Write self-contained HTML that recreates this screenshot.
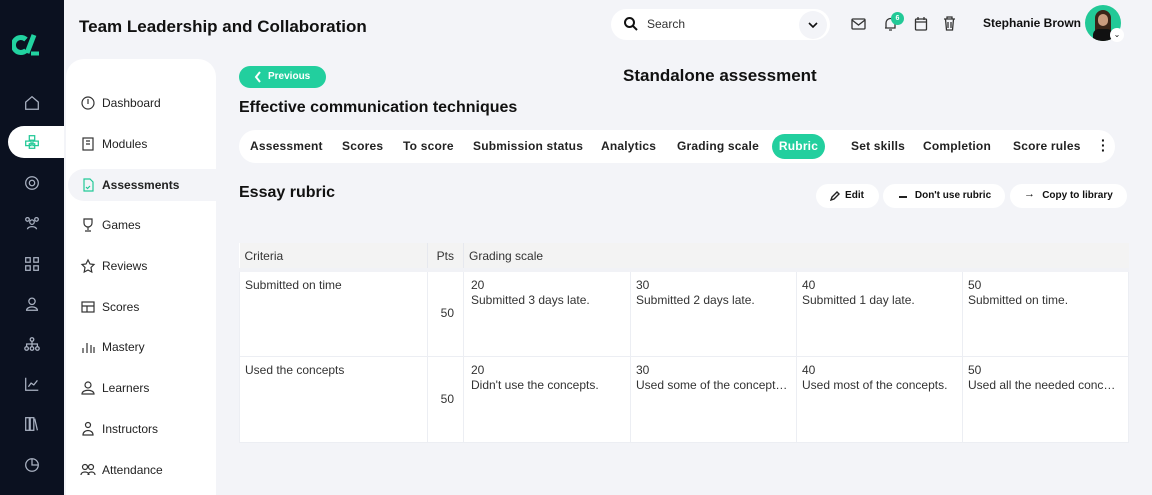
<!DOCTYPE html>
<html><head><style>
*{box-sizing:border-box;margin:0;padding:0}
body{width:1152px;height:495px;overflow:hidden;background:#f3f4f8;font-family:"Liberation Sans",sans-serif;color:#111;position:relative}
.abs{position:absolute}
.side{left:0;top:0;width:64px;height:495px;background:#0b1120}
.side svg{position:absolute;left:23px;width:18px;height:18px;stroke:#aab2c2;fill:none;stroke-width:1.4}
.nav{left:66px;top:59px;width:150px;height:436px;background:#fff;border-top-left-radius:18px;border-top-right-radius:18px}
.ni{position:absolute;left:14px;font-size:12px;color:#222;height:32px;line-height:32px;width:136px;padding-left:22px}
.ni svg{position:absolute;left:0;top:8px;width:16px;height:16px;stroke:#333;fill:none;stroke-width:1.2}
.tabs{left:239px;top:130px;width:876px;height:33px;background:#fff;border-radius:17px}
.tab{position:absolute;top:0;height:33px;line-height:33px;font-size:12px;font-weight:bold;color:#222;letter-spacing:.2px}
.btn{position:absolute;top:184px;height:24px;background:#fff;border-radius:12px;font-size:10px;font-weight:bold;line-height:24px;text-align:center}
table{position:absolute;left:239px;top:243px;width:890px;border-collapse:collapse;font-size:12px;color:#333;background:#fff}
td{border:1px solid #eceef3;vertical-align:top;padding:6px 5px;line-height:15px}
th{background:#f3f3f3;font-weight:normal;text-align:left;padding:0 5px;height:27px;border-bottom:4px solid #f1f2f6;border-right:1px solid #e6e8ee}
</style></head><body>
<div class="abs side">
<svg style="left:12px;top:33px;width:28px;height:24px;stroke:#22d3a0;stroke-width:5;stroke-linecap:butt" viewBox="0 0 28 24"><path d="M14 6.5A7.5 7.5 0 1 0 14 17.5"/><path d="M22 2L15 20"/><path d="M19 20.5h8" stroke-width="4"/></svg>
<svg style="top:94px" viewBox="0 0 20 20"><path d="M3 9l7-6 7 6v8H3z"/></svg>
<div class="abs" style="left:8px;top:126px;width:56px;height:32px;background:#fff;border-radius:16px 0 0 16px"></div>
<svg style="top:133px;stroke:#22c997" viewBox="0 0 20 20"><rect x="7" y="3" width="6" height="5"/><rect x="3" y="9" width="6" height="5"/><rect x="11" y="9" width="6" height="5"/><rect x="7" y="12" width="6" height="5"/></svg>
<svg style="top:174px" viewBox="0 0 20 20"><circle cx="10" cy="10" r="7"/><circle cx="10" cy="10" r="3"/></svg>
<svg style="top:214px" viewBox="0 0 20 20"><circle cx="5" cy="6" r="2"/><circle cx="15" cy="6" r="2"/><circle cx="10" cy="9" r="2.5"/><path d="M5 17c0-4 10-4 10 0"/></svg>
<svg style="top:255px" viewBox="0 0 20 20"><rect x="3" y="3" width="5" height="5"/><rect x="12" y="3" width="5" height="5"/><rect x="3" y="12" width="5" height="5"/><rect x="12" y="12" width="5" height="5"/></svg>
<svg style="top:295px" viewBox="0 0 20 20"><circle cx="10" cy="7" r="3.5"/><path d="M4 17c0-5 12-5 12 0z"/></svg>
<svg style="top:335px" viewBox="0 0 20 20"><circle cx="10" cy="5" r="2"/><circle cx="4" cy="15" r="2"/><circle cx="10" cy="15" r="2"/><circle cx="16" cy="15" r="2"/><path d="M10 7v6M4 13v-3h12v3"/></svg>
<svg style="top:375px" viewBox="0 0 20 20"><path d="M3 3v14h14M6 13l3-4 3 2 4-5"/></svg>
<svg style="top:415px" viewBox="0 0 20 20"><rect x="3" y="3" width="4" height="14"/><rect x="8" y="3" width="4" height="14"/><path d="M13 4l3 13"/></svg>
<svg style="top:456px" viewBox="0 0 20 20"><circle cx="10" cy="10" r="7"/><path d="M10 3v7h7"/></svg>
</div>
<div class="abs" style="left:79px;top:17px;font-size:17px;font-weight:bold">Team Leadership and Collaboration</div>
<div class="abs nav">
<div class="abs" style="left:2px;top:110px;width:148px;height:32px;background:#f3f4f8;border-radius:16px 0 0 16px"></div>
<div class="ni" style="top:28px"><svg viewBox="0 0 16 16"><circle cx="8" cy="8" r="6"/><path d="M8 4v5"/></svg>Dashboard</div>
<div class="ni" style="top:69px"><svg viewBox="0 0 16 16"><rect x="3" y="2" width="10" height="12"/><path d="M6 5h4M6 8h4"/></svg>Modules</div>
<div class="ni" style="top:110px;font-weight:bold"><svg viewBox="0 0 16 16" style="stroke:#22c997"><path d="M4 2h6l3 3v9H4z"/><path d="M6 10l1.5 1.5L10 9"/></svg>Assessments</div>
<div class="ni" style="top:150px"><svg viewBox="0 0 16 16"><path d="M4 2h8v4a4 4 0 0 1-8 0zM8 10v3M5 14h6"/></svg>Games</div>
<div class="ni" style="top:191px"><svg viewBox="0 0 16 16"><path d="M8 2l2 4 4 .5-3 3 .8 4.5L8 12l-3.8 2 .8-4.5-3-3 4-.5z"/></svg>Reviews</div>
<div class="ni" style="top:232px"><svg viewBox="0 0 16 16"><rect x="2" y="3" width="12" height="10"/><path d="M2 7h12M7 7v6"/></svg>Scores</div>
<div class="ni" style="top:272px"><svg viewBox="0 0 16 16"><path d="M3 14V9M7 14V4M11 14V6M14 14V8"/></svg>Mastery</div>
<div class="ni" style="top:313px"><svg viewBox="0 0 16 16"><circle cx="8" cy="5" r="3"/><path d="M2 14c0-5 12-5 12 0z"/></svg>Learners</div>
<div class="ni" style="top:354px"><svg viewBox="0 0 16 16"><circle cx="8" cy="4" r="2.5"/><path d="M3 14c0-6 10-6 10 0z"/></svg>Instructors</div>
<div class="ni" style="top:395px"><svg viewBox="0 0 16 16"><circle cx="5" cy="5" r="2.5"/><circle cx="11" cy="5" r="2.5"/><path d="M1 13c0-4 8-4 8 0M8 13c0-4 7-4 7 0"/></svg>Attendance</div>
</div>
<div class="abs" style="left:611px;top:9px;width:219px;height:31px;background:#fff;border-radius:16px"></div>
<svg class="abs" style="left:623px;top:16px" width="16" height="16" viewBox="0 0 16 16" fill="none" stroke="#111" stroke-width="2"><circle cx="6.5" cy="6.5" r="4.5"/><path d="M10 10l4 4"/></svg>
<div class="abs" style="left:647px;top:17px;font-size:12px;color:#333">Search</div>
<div class="abs" style="left:799px;top:11px;width:28px;height:28px;border-radius:14px;background:#f3f4f8"></div>
<svg class="abs" style="left:807px;top:19px" width="12" height="12" viewBox="0 0 12 12" fill="none" stroke="#111" stroke-width="1.6"><path d="M2 4l4 4 4-4"/></svg>
<svg class="abs" style="left:851px;top:17px" width="15" height="14" viewBox="0 0 15 14" fill="none" stroke="#333" stroke-width="1.3"><rect x="1" y="2" width="13" height="10" rx="1"/><path d="M1 3l6.5 5L14 3"/></svg>
<svg class="abs" style="left:883px;top:16px" width="15" height="16" viewBox="0 0 15 16" fill="none" stroke="#333" stroke-width="1.3"><path d="M3 12V7a4.5 4.5 0 0 1 9 0v5H2M6 14h3"/></svg>
<div class="abs" style="left:891px;top:12px;width:13px;height:13px;border-radius:7px;background:#22c997;color:#fff;font-size:7px;text-align:center;line-height:13px;font-weight:bold">6</div>
<svg class="abs" style="left:914px;top:16px" width="14" height="15" viewBox="0 0 14 15" fill="none" stroke="#333" stroke-width="1.3"><rect x="1.5" y="3" width="11" height="11" rx="1"/><path d="M1.5 6h11M4 1v3M10 1v3"/></svg>
<svg class="abs" style="left:943px;top:16px" width="13" height="15" viewBox="0 0 13 15" fill="none" stroke="#333" stroke-width="1.3"><path d="M1 3h11M4 3V1h5v2M2.5 3l1 11h6l1-11M5 6v6M8 6v6"/></svg>
<div class="abs" style="left:983px;top:16px;font-size:12px;font-weight:bold">Stephanie Brown</div>
<div class="abs" style="left:1085px;top:5px;width:36px;height:36px;border-radius:18px;background:#22c997;overflow:hidden"><div style="position:absolute;left:10px;top:5px;width:16px;height:32px;background:#3a2418;border-radius:8px 8px 0 0"></div><div style="position:absolute;left:13px;top:9px;width:10px;height:12px;background:#c99b7e;border-radius:5px"></div><div style="position:absolute;left:8px;top:24px;width:20px;height:14px;background:#111;border-radius:6px 6px 0 0"></div></div>
<div class="abs" style="left:1110px;top:28px;width:14px;height:14px;border-radius:7px;background:#fff;font-size:8px;text-align:center;line-height:13px">⌄</div>
<div class="abs" style="left:239px;top:66px;width:87px;height:22px;background:#22cf9e;border-radius:11px;color:#fff;font-size:10px;font-weight:bold;line-height:22px;padding-left:29px">Previous</div>
<svg class="abs" style="left:254px;top:71px" width="8" height="12" viewBox="0 0 8 12" fill="none" stroke="#fff" stroke-width="2"><path d="M6 1L2 6l4 5"/></svg>
<div class="abs" style="left:623px;top:66px;font-size:17px;font-weight:bold">Standalone assessment</div>
<div class="abs" style="left:239px;top:99px;font-size:16px;font-weight:bold">Effective communication techniques</div>
<div class="abs tabs">
<div class="tab" style="left:11px">Assessment</div>
<div class="tab" style="left:103px">Scores</div>
<div class="tab" style="left:164px">To score</div>
<div class="tab" style="left:234px">Submission status</div>
<div class="tab" style="left:362px">Analytics</div>
<div class="tab" style="left:438px">Grading scale</div>
<div class="tab" style="left:533px;top:4px;height:25px;line-height:25px;width:53px;text-align:center;background:#22cf9e;border-radius:13px;color:#fff">Rubric</div>
<div class="tab" style="left:612px">Set skills</div>
<div class="tab" style="left:684px">Completion</div>
<div class="tab" style="left:774px">Score rules</div>
</div>
<div class="abs" style="left:1101px;top:138px;font-size:14px;font-weight:bold;line-height:5px">·<br>·<br>·</div>
<div class="abs" style="left:239px;top:184px;font-size:16px;font-weight:bold">Essay rubric</div>
<div class="btn" style="left:816px;width:63px;padding-left:14px">Edit</div>
<svg class="abs" style="left:830px;top:191px" width="10" height="10" viewBox="0 0 10 10" fill="none" stroke="#222" stroke-width="1.4"><path d="M1 9l1-3 5-5 2 2-5 5z"/></svg>
<div class="btn" style="left:883px;width:122px;padding-left:18px">Don't use rubric</div>
<div class="abs" style="left:899px;top:196px;width:8px;height:1.5px;background:#222"></div>
<div class="btn" style="left:1010px;width:117px;padding-left:18px">Copy to library</div>
<div class="abs" style="left:1024px;top:188px;font-size:11px">→</div>
<table>
<tr><th style="width:188px">Criteria</th><th style="width:36px;text-align:right;padding-right:9px">Pts</th><th colspan="4" style="border-right:none">Grading scale</th></tr>
<tr style="height:86px"><td>Submitted on time</td><td style="vertical-align:middle;text-align:right;padding-right:9px">50</td><td style="width:167px;padding-left:7px">20<br>Submitted 3 days late.</td><td style="width:166px">30<br>Submitted 2 days late.</td><td style="width:166px">40<br>Submitted 1 day late.</td><td>50<br>Submitted on time.</td></tr>
<tr style="height:86px"><td>Used the concepts</td><td style="vertical-align:middle;text-align:right;padding-right:9px">50</td><td style="padding-left:7px">20<br>Didn't use the concepts.</td><td>30<br>Used some of the concept…</td><td>40<br>Used most of the concepts.</td><td>50<br>Used all the needed conc…</td></tr>
</table>
</body></html>
